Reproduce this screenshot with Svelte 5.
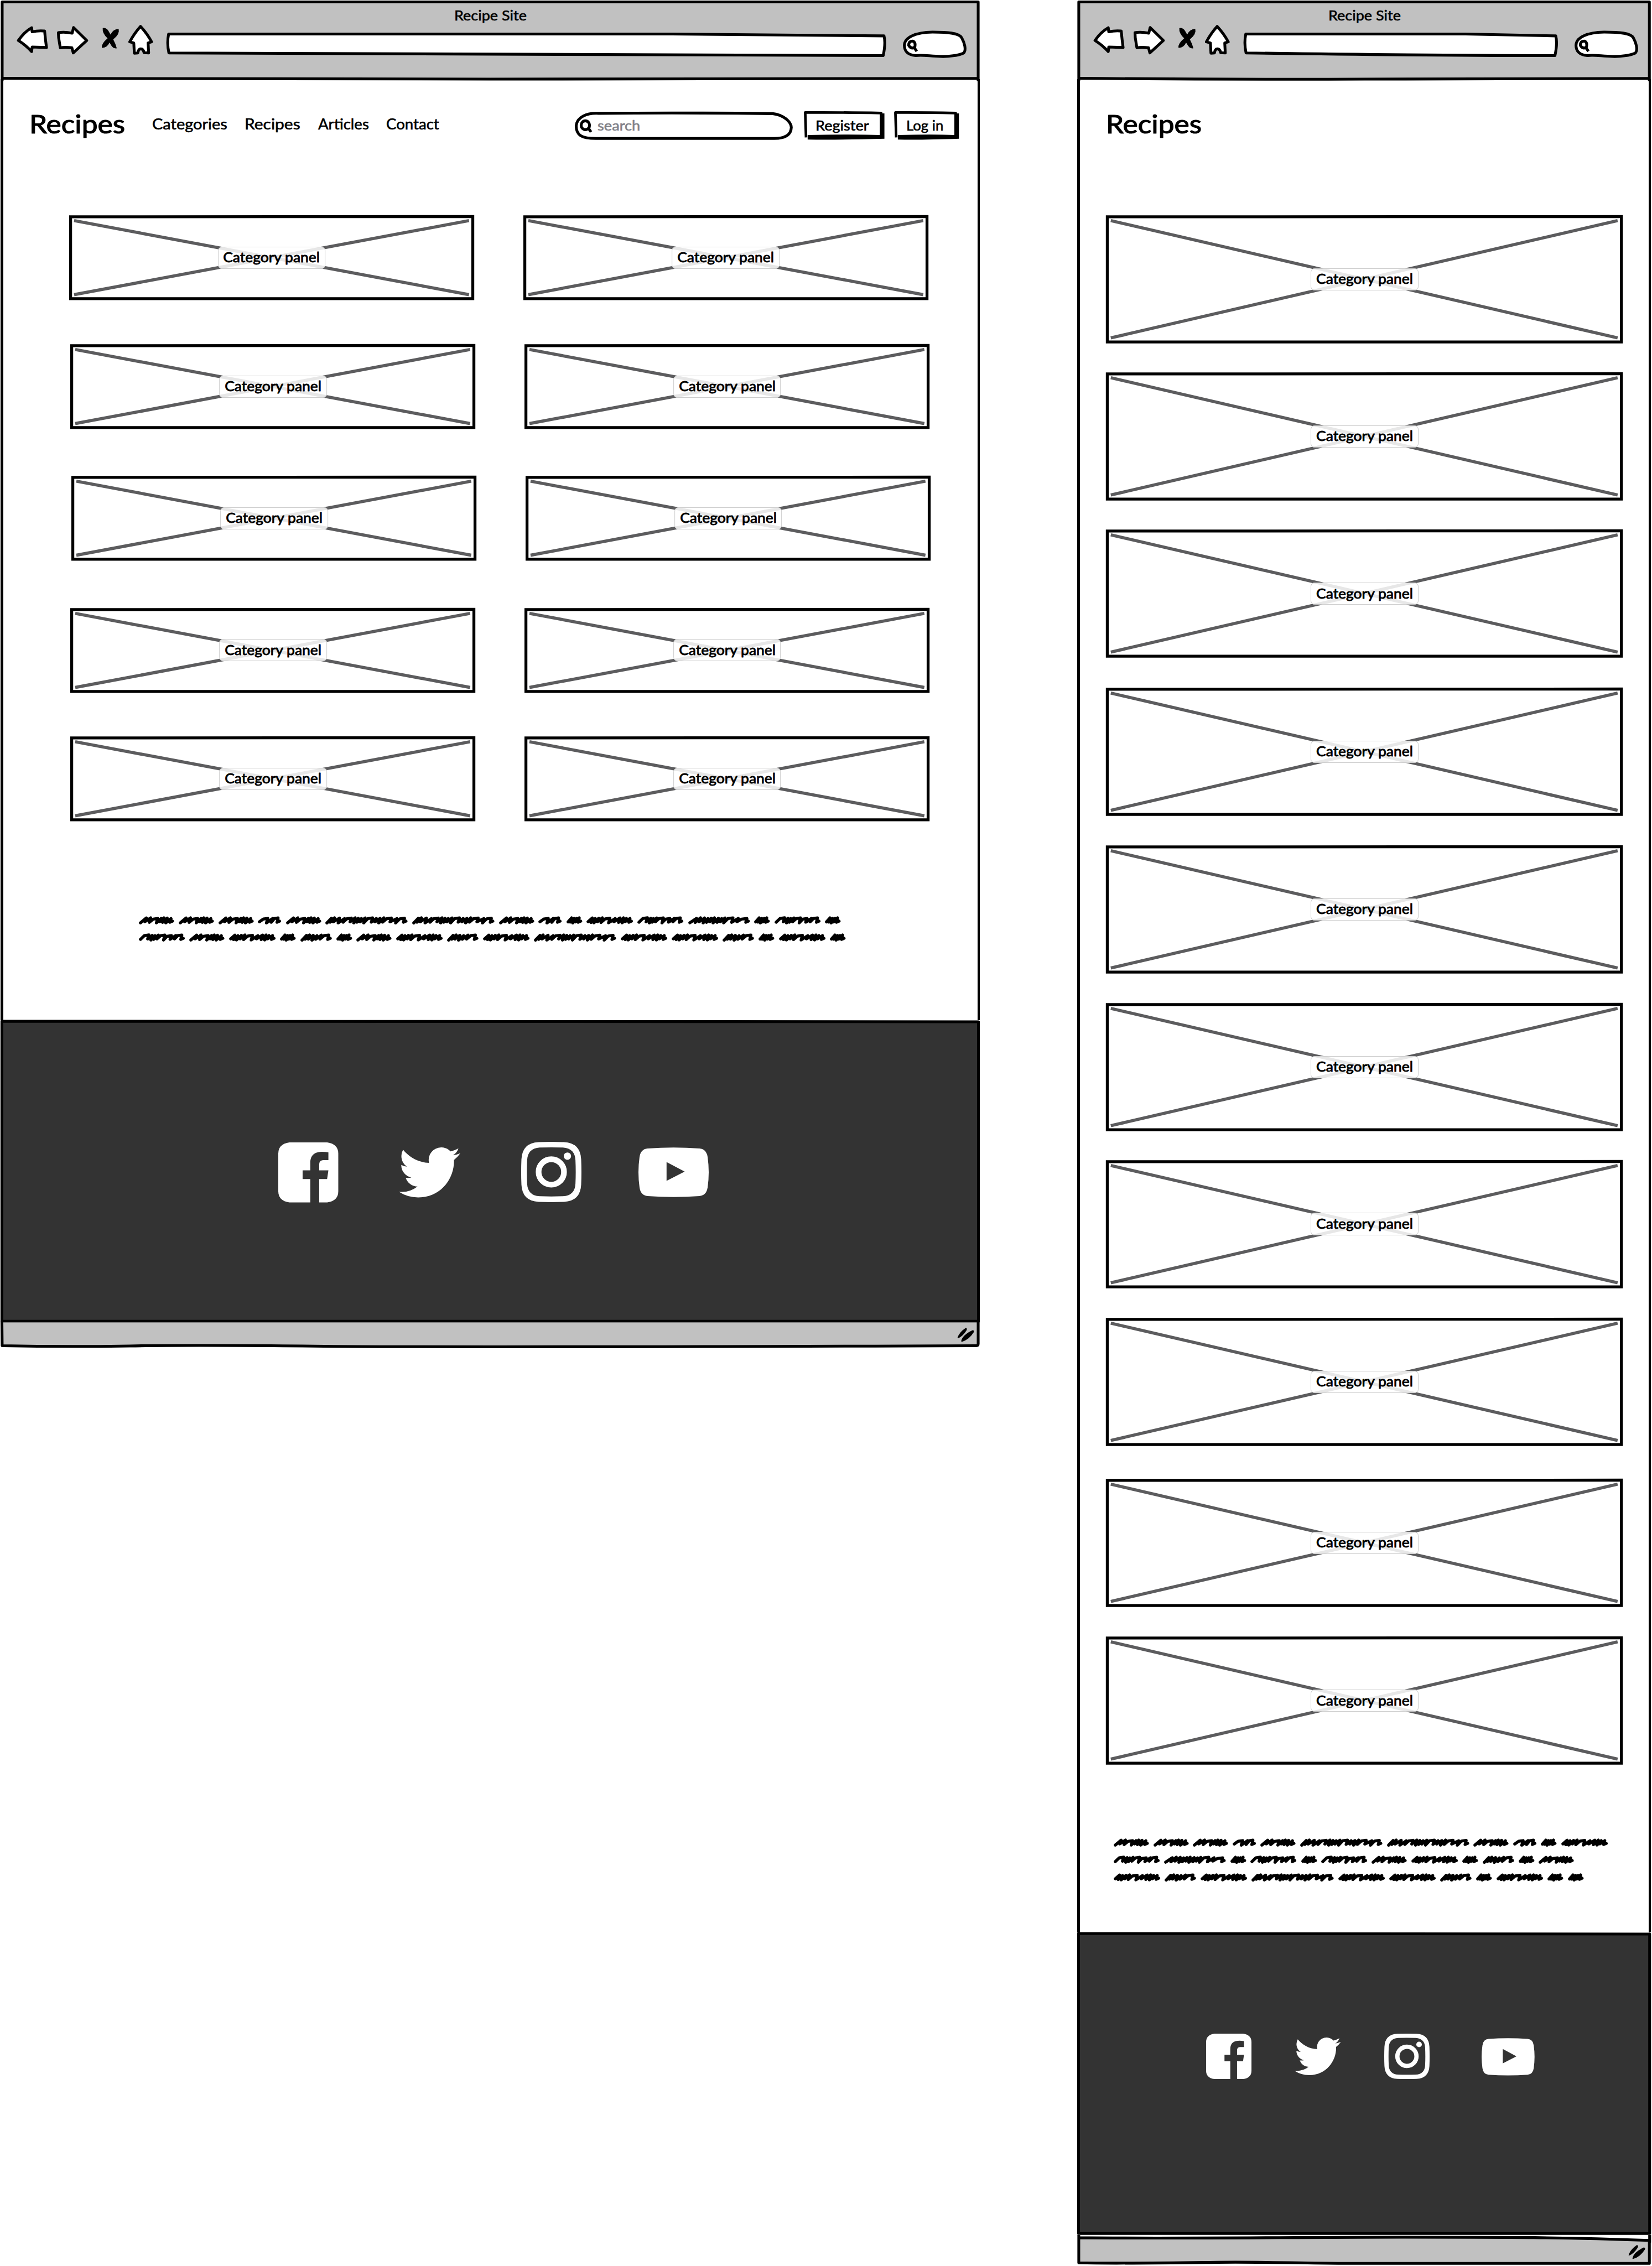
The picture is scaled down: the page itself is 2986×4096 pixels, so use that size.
<script>
  const RIGHT_TOOLS = 156;

  const desktop = {
    width: 1814,
    rows: [
      { top: 136.5, left: 129 },
      { top: 81, left: 131.5 },
      { top: 87, left: 133.5 },
      { top: 87, left: 131.5 },
      { top: 81, left: 131.5 }
    ],
    words: [
      [65, 65, 65, 43, 65, 152, 152, 65, 43, 29, 86, 85, 114, 29, 85, 29],
      [85, 65, 86, 29, 58, 29, 65, 86, 58, 86, 152, 86, 86, 58, 29, 86, 29]
    ]
  };

  const mobile = {
    width: 1064,
    rows: [136, 54, 54, 55, 55, 55, 53, 55, 61, 55],
    words: [
      [65, 65, 65, 43, 65, 152, 152, 65, 43, 29, 86],
      [85, 114, 29, 85, 29, 85, 65, 86, 29, 58, 29, 65],
      [86, 58, 86, 152, 86, 86, 58, 29, 86, 29, 29]
    ]
  };

  const links = [
    ['Categories', 139],
    ['Recipes', 103],
    ['Articles', 94],
    ['Contact', 98]
  ];

  // Horizontal rhythm of the pen strokes in each scribbled word, keyed by word width
  const rhythm = {
    29: [5, 6, 6, 6],
    43: [13, 9, 10],
    58: [5, 5, 6, 6, 7, 12],
    65: [8, 8, 13, 6, 5, 6, 7],
    85: [13, 6, 5, 6, 12, 12, 8, 11],
    86: [5, 5, 6, 6, 13, 9, 8, 6, 5, 6],
    114: [8, 6, 6, 5, 5, 5, 6, 5, 5, 12, 8, 13],
    152: [5, 5, 8, 8, 11, 6, 5, 5, 6, 12, 6, 6, 6, 12, 9, 12]
  };

  // Each pen stroke rises to the right; the next one starts back at the foot of the last
  function scribble(w) {
    const steps = rhythm[w];
    const total = steps.reduce((a, b) => a + b, 0);
    const k = (w - 11) / total;
    let x = 3;
    let d = '';
    steps.forEach((s, i) => {
      const step = s * k;
      const low = 19.6 + Math.sin(i * 2.1 + w) * 1.2;
      const high = 12 + Math.cos(i * 1.7 + w) * 0.7;
      const topX = x + step + 2.5;
      d += `${i ? 'L' : 'M'}${x.toFixed(1)} ${low.toFixed(1)}`;
      if (s > 9) d += `L${(x + step * 0.55).toFixed(1)} ${(high + 1.2).toFixed(1)}`;
      d += `L${topX.toFixed(1)} ${high.toFixed(1)}`;
      x += step;
    });
    d += `L${(x + 0.5).toFixed(1)} 19.500L${w - 2.8} 17.500`;
    return d;
  }
</script>

{#snippet label(text, w, size, cls = '')}
  <svg class="label {cls}" width={w} height={size} font-size={size}>
    <text x="0" y={size * 0.86} textLength={w} lengthAdjust="spacingAndGlyphs">{text}</text>
  </svg>
{/snippet}

{#snippet chrome(w)}
  {@const u = w - 466}
  <header class="chrome">
    <svg class="backdrop" width={w} height="150">
      <path class="grey" d="M4 3.500H{w - 4.500}V145H4Z" />
      <path class="ink" d="M4 150V3.500H{w - 4.500}V150" />
      <path class="ink" d="M4 144.800Q{w * 0.25} 147.200 {w * 0.5} 146.400T{w - 4.500} 145" />
    </svg>
    <div class="title">{@render label('Recipe Site', 134, 26)}</div>
    <div class="toolbar">
      <svg class="nav-icons" width="300" height="72" viewBox="0 40 300 72">
        <g class="outline">
          <path d="M34 75Q45 59 58.500 51.500L59.500 59Q70 56.500 82.500 57.500Q84 74 86 88L59.500 87L58.500 95.500Q48 84 34 75Z" />
          <path d="M136 51L160.500 75L135.500 98L133 88.500Q120 87 111.500 88.500L108.500 70L108 60.500Q119 58.500 133.500 61.500Z" />
          <path d="M260 49Q272 62 280.500 77.500L274 79.500L275 98L266.500 97.500Q265 90.500 260.500 90.500T255 98L248.500 98.500L247.500 79.500L240 77.500Q249 61 260 49Z" />
        </g>
        <path d="M190 52Q197 51 201 58L204.500 64Q209 54 219.500 53.500Q222 63 209.500 73Q214 81 216 89.500Q209 91 204.500 82L202.500 79Q198 89 188.500 88.500Q187 81 199 71Q189 62 190 52Z" />
      </svg>
      <svg class="url" width={w - 456} height="72" viewBox="300 40 {w - 456} 72">
        <path class="outline" d="M312 63H{300 + u * 0.7}L{u + 287.500} 66.500Q{u + 291} 80 {u + 286} 103Q{300 + u * 0.6} 103 312.500 98Q308.500 80 312 63Z" />
      </svg>
      <svg class="pill" width={RIGHT_TOOLS} height="72" viewBox="1658 40 156 72">
        <path class="outline" d="M1673 84C1673 69 1694 60 1725 59.500C1752 59.500 1774 61 1779 70C1784 79 1788 92 1783 98C1773 103 1754 105 1740 104.500C1720 104 1706 101 1694 103C1680 102 1673 95 1673 84Z" />
        <path class="ink" d="M1692 88Q1695 78 1688 76Q1681 76 1681 84Q1685 91 1691 88L1696 95" />
      </svg>
    </div>
  </header>
{/snippet}

{#snippet panel(w, h)}
  <div class="panel">
    <svg class="sketch" width={w} height={h}>
      <path class="cross" d="M9 10L{w - 9.500} {h - 10}M9 {h - 10}L{w - 9.500} 10" />
      <path class="ink frame" d="M2.500 3L{w - 2.500} 2.500V{h - 2.500}H2.500Z" />
    </svg>
    <div class="tag">{@render label('Category panel', 179, 26, 'strong')}</div>
  </div>
{/snippet}

{#snippet button(text, textWidth, w)}
  <div class="button">
    <svg class="backdrop" width={w} height="54">
      <path d="M7 53.500Q{w * 0.4} 54.500 {w} 52V5H{w - 8}V45Q{w * 0.6} 43.500 7 45Z" />
      <path class="ink thin" d="M4 49.500L2.500 3.500Q{w * 0.4} 3 {w - 6} 4.500V47" />
    </svg>
    {@render label(text, textWidth, 26)}
  </div>
{/snippet}

{#snippet note(lines)}
  <div class="note">
    {#each lines as line}
      <div class="line">
        {#each line as w}
          <svg width={w} height="32"><path d={scribble(w)} /></svg>
        {/each}
      </div>
    {/each}
  </div>
{/snippet}

{#snippet social()}
  <svg class="facebook" viewBox="0 0 111 111">
    <path fill-rule="evenodd" d="M20.500 0H90.500Q111 3 111 20.500V90.500Q111 108 90.500 111H75.700V67.700H90.300L92.700 51.700H75.700V42C75.700 35 78 32.700 85.500 32.700H92.700V18.300C74 15.500 59.200 18.500 59.200 38V51.700H45V67.700H59.200V111H20.500Q0 108 0 90.500V20.500Q0 3 20.500 0Z" />
  </svg>
  <svg class="twitter" viewBox="0 2.26 24 19.5" preserveAspectRatio="none">
    <path d="M23.953 4.57a10 10 0 01-2.825.775 4.958 4.958 0 002.163-2.723c-.951.555-2.005.959-3.127 1.184a4.92 4.92 0 00-8.384 4.482C7.69 8.095 4.067 6.13 1.64 3.162a4.822 4.822 0 00-.666 2.475c0 1.71.87 3.213 2.188 4.096a4.904 4.904 0 01-2.228-.616v.06a4.923 4.923 0 003.946 4.827 4.996 4.996 0 01-2.212.085 4.936 4.936 0 004.604 3.417 9.867 9.867 0 01-6.102 2.105c-.39 0-.779-.023-1.17-.067a13.995 13.995 0 007.557 2.209c9.053 0 13.998-7.496 13.998-13.985 0-.21 0-.42-.015-.63A9.935 9.935 0 0024 4.59z" />
  </svg>
  <svg class="instagram" viewBox="0 0 111 111">
    <path fill-rule="evenodd" d="M32 .5Q55.500 -.5 79 .5Q109 2 110.500 32Q111.500 55.500 110.500 79Q109 109 79 110.500Q55.500 111.500 32 110.500Q2 109 .5 79Q-.5 55.500 .5 32Q2 2 32 .5ZM34 10.500Q12 12 11 34Q10 55.500 11 77Q12 99 34 100.200Q55.500 100.800 77 100.200Q99 99 100 77Q101 55.500 100 34Q99 12 77 10.500Q55.500 10 34 10.500Z" />
    <circle class="ring" cx="55.500" cy="55.500" r="23.400" />
    <circle cx="85.200" cy="26.300" r="6.800" />
  </svg>
  <svg class="youtube" viewBox="0 0 130 92">
    <path fill-rule="evenodd" d="M17 2Q65 -1.500 113 2Q126 3 128 18Q132 46 128 74Q126 89 113 90Q65 93.500 17 90Q4 89 2 74Q-2 46 2 18Q4 3 17 2ZM52 27V62L85.500 44.700Z" />
  </svg>
{/snippet}

{#snippet footer(w)}
  <footer class="footer">
    <svg class="backdrop" width={w} height="559">
      <path class="dark" d="M3.500 2.500H{w - 4.500}V557H3.500Z" />
      <path class="ink" d="M3.500 2L{w - 4} 3V557H3.500Z" />
    </svg>
    {@render social()}
  </footer>
{/snippet}

{#snippet grip(w)}
  <path d="M{w - 43} 31.500Q{w - 40} 21 {w - 27.500} 12.500Q{w - 24} 13 {w - 26.500} 18Q{w - 33} 28 {w - 41} 31.500Z" />
  <path d="M{w - 36} 37.500Q{w - 34} 26 {w - 15} 17Q{w - 11} 17 {w - 13} 21Q{w - 21} 34 {w - 34} 38Z" />
{/snippet}

<div class="board">
  <section class="window desktop">
    {@render chrome(desktop.width)}
    <div class="page">
      <nav class="nav">
        {@render label('Recipes', 177, 47, 'logo')}
        <div class="links">
          {#each links as [text, w]}
            {@render label(text, w, 27)}
          {/each}
        </div>
        <div class="search">
          <svg class="backdrop" width="406" height="54">
            <path class="outline" d="M45 5Q200 3.500 367 5.500C388 8 401 21 401.500 31C401 46 388 51.500 370 51.500H40C14 51.500 3.500 46 3.500 28C5 12 22 4 45 5Z" />
            <ellipse class="ink" cx="20.500" cy="27" rx="7.800" ry="8.200" />
            <path class="ink" d="M26.500 33L31 39.500" />
          </svg>
          {@render label('search', 79, 26, 'hint')}
        </div>
        {@render button('Register', 99, 149)}
        {@render button('Log in', 69, 120)}
      </nav>
      {#each desktop.rows as row}
        <div class="row" style="margin-top:{row.top}px;margin-left:{row.left}px">
          {@render panel(749, 157)}
          {@render panel(749, 157)}
        </div>
      {/each}
      {@render note(desktop.words)}
    </div>
    {@render footer(desktop.width)}
    <div class="status">
      <svg class="backdrop" width={desktop.width} height="52">
        <path class="grey" d="M4 2.500H1809.500V45Q900 46.500 4 46Z" />
        <path class="ink" d="M3.500 0L4 45.500Q120 48 240 46T600 46.500T1806 45.500Q1809.500 45.500 1809.500 42V0" />
        {@render grip(desktop.width)}
      </svg>
    </div>
  </section>

  <section class="window mobile">
    {@render chrome(mobile.width)}
    <div class="page">
      <nav class="nav">{@render label('Recipes', 177, 47, 'logo')}</nav>
      {#each mobile.rows as top}
        <div class="row" style="margin-top:{top}px">{@render panel(956, 237)}</div>
      {/each}
      {@render note(mobile.words)}
    </div>
    {@render footer(mobile.width)}
    <div class="status">
      <svg class="backdrop" width={mobile.width} height="56">
        <path class="grey" d="M4 5C200 7 400 4 600 4S900 4 1059.500 10V52H4Z" />
        <path class="ink" d="M4 0V5C200 7 400 4 600 4S900 4 1059.500 10V52.500H500C420 52 340 49.500 260 50.500S80 53 4 51.500V0" />
        <path class="ink" d="M1060 0V14" />
        <g transform="translate(0 6)">{@render grip(mobile.width)}</g>
      </svg>
    </div>
  </section>
</div>

<style>
  :global(body) {
    margin: 0;
    background: #fff;
    overflow: hidden;
  }
  .board {
    zoom: 0.9771;
    width: 3056px;
    height: 4192px;
    display: flex;
    align-items: flex-start;
    gap: 178px;
    overflow: hidden;
    background: #fff;
    color: #000;
    font-family: Lato, "Open Sans", sans-serif;
  }
  svg {
    display: block;
    flex: none;
    overflow: visible;
  }
  .window {
    flex: none;
    display: flex;
    flex-direction: column;
  }
  .desktop { width: 1814px; }
  .mobile { width: 1064px; }
  .backdrop {
    position: absolute;
    inset: 0 auto auto 0;
    z-index: -1;
  }
  .chrome, .search, .button, .footer, .status { isolation: isolate; }

  .ink, .outline {
    stroke: #000;
    stroke-width: 5.2;
    stroke-linejoin: round;
  }
  .ink { fill: none; }
  .thin { stroke-width: 4.8; }
  .frame { stroke-linejoin: miter; stroke-width: 5.4; }
  .outline, .outline path { fill: #fff; }
  .grey { fill: #c1c1c1; }
  .dark { fill: #333; }

  .label text {
    fill: currentColor;
    stroke: currentColor;
    stroke-width: 0.6;
    stroke-linejoin: round;
  }
  .label.strong text { stroke-width: 0.9; }
  .label.logo text { stroke-width: 1.2; }
  .label.hint { color: #808088; }

  .chrome {
    position: relative;
    height: 146px;
  }
  .title {
    display: flex;
    justify-content: center;
    height: 25px;
    padding-top: 15px;
  }
  .toolbar { display: flex; }

  .page {
    box-sizing: border-box;
    border: solid #000;
    border-width: 0 5px 0 6px;
    margin-right: 2px;
    margin-left: 1px;
  }
  .desktop .page { height: 1741px; }
  .mobile .page { height: 3429px; }

  .nav {
    box-sizing: border-box;
    height: 116px;
    padding: 56px 34px 0 48px;
    display: flex;
    align-items: center;
  }
  .label.logo { margin-bottom: 6px; }
  .links {
    flex: 1;
    display: flex;
    gap: 32.5px;
    margin: 0 0 6px 50px;
  }
  .search {
    position: relative;
    width: 362px;
    height: 54px;
    padding-left: 43px;
    margin-right: 20px;
    display: flex;
    align-items: center;
  }
  .button {
    position: relative;
    box-sizing: border-box;
    width: 149px;
    height: 54px;
    padding-left: 22px;
    display: flex;
    align-items: center;
  }
  .button + .button {
    width: 120px;
    margin-left: 18px;
  }

  .row {
    display: flex;
    gap: 91px;
  }
  .desktop .row { transform: translateX(-7px); }
  .mobile .row { padding-left: 48px; }
  .panel {
    flex: none;
    display: grid;
    place-items: center;
  }
  .panel > * { grid-area: 1 / 1; }
  .cross {
    fill: none;
    stroke: #5c5c5e;
    stroke-width: 5.8;
  }
  .tag {
    box-sizing: border-box;
    width: 199px;
    height: 41px;
    padding-bottom: 2px;
    border: 2px solid #ccc;
    border-radius: 7px;
    background: rgba(255, 255, 255, 0.85);
    display: flex;
    align-items: center;
    justify-content: center;
  }

  .note path {
    fill: none;
    stroke: #000;
    stroke-width: 5.6;
    stroke-linecap: round;
    stroke-linejoin: round;
  }
  .desktop .note { padding: 167px 0 0 251px; }
  .mobile .note { padding: 128px 0 0 62px; }
  .line {
    display: flex;
    gap: 8.4px;
  }

  .footer {
    position: relative;
    box-sizing: border-box;
    height: 557px;
    display: flex;
    align-items: center;
    fill: #fff;
  }
  .footer .backdrop { fill: none; }
  .desktop .footer { padding: 6px 0 0 514.5px; }
  .mobile .footer { padding: 0 0 98px 239px; }
  .ring {
    fill: none;
    stroke: #fff;
    stroke-width: 10.5;
  }
  .desktop .facebook { width: 111px; height: 111px; margin-right: 112px; }
  .desktop .twitter { width: 113.5px; height: 92.7px; margin-right: 113px; }
  .desktop .instagram { width: 111.5px; height: 111.5px; margin-right: 105.5px; }
  .desktop .youtube { width: 130px; height: 92px; }
  .mobile .facebook { width: 84px; height: 84px; margin-right: 80px; }
  .mobile .twitter { width: 85.5px; height: 69.5px; margin-right: 80.3px; }
  .mobile .instagram { width: 84px; height: 84px; margin-right: 96px; }
  .mobile .youtube { width: 98px; height: 69.3px; }

  .status {
    position: relative;
    height: 50px;
  }
  .mobile .status { top: 3px; }
</style>
